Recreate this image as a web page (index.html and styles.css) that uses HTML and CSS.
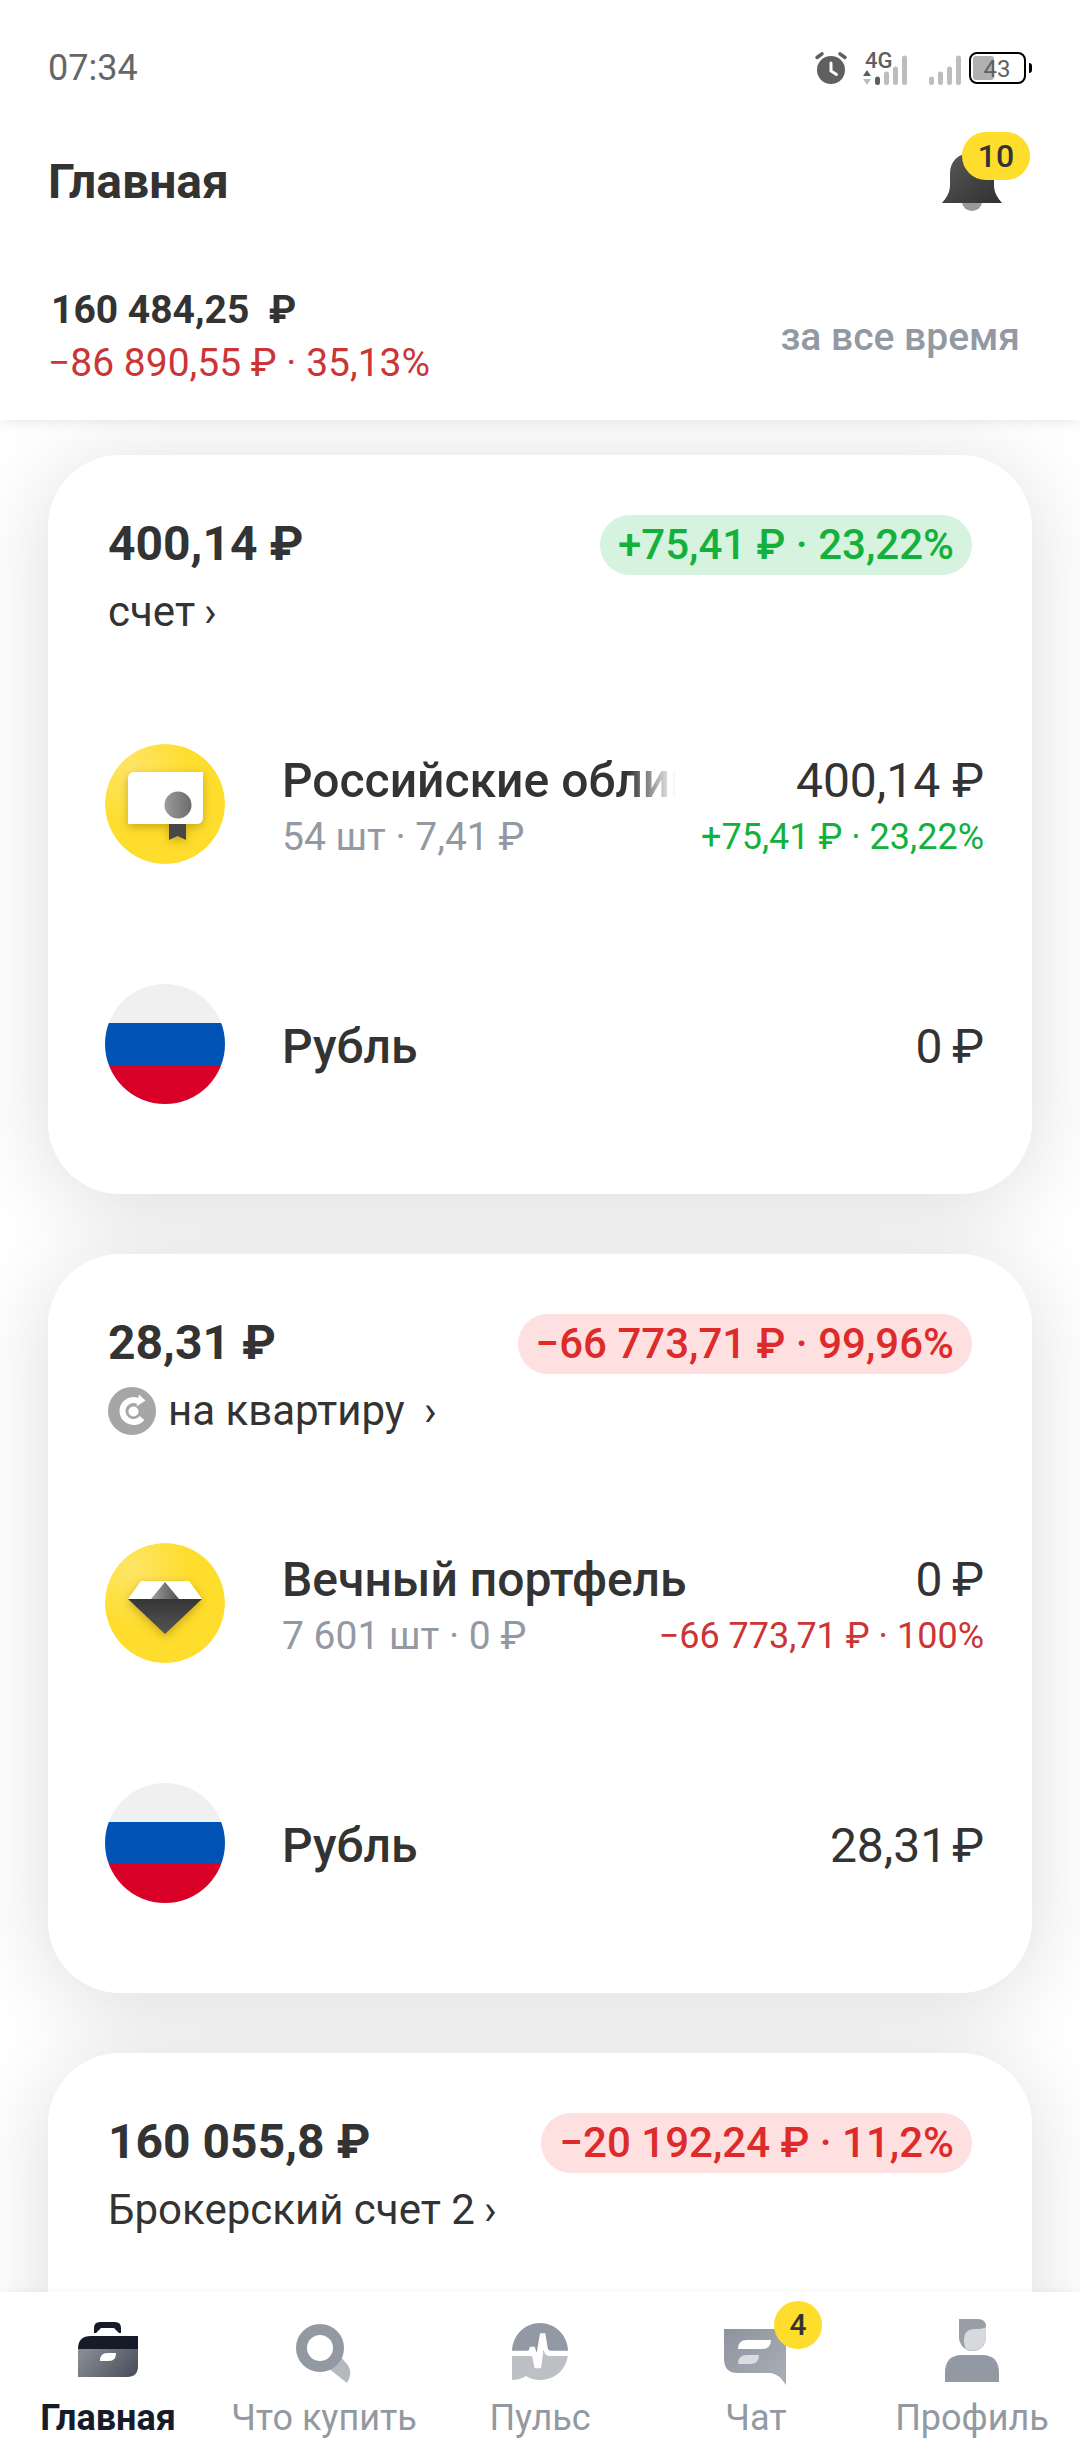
FILE: index.html
```html
<!DOCTYPE html>
<html lang="ru">

<head>
    <meta charset="UTF-8">
    <meta name="viewport" content="width=device-width, initial-scale=1.0">
    <title>Главная</title>
    <link rel="stylesheet" href="styles.css">
</head>

<body>

    <div class="app">
        <header class="header">
            <!-- status bar -->
            <div class="status">
                <span class="time">07:34</span>
                <div class="status-icons">
                    <svg class="alarm" width="32" height="32" viewBox="0 0 32 32">
                        <circle cx="16" cy="18" r="14" fill="#5f5f5f"/>
                        <path d="M2 5.500 7 1.800M30 5.500 25 1.800" stroke="#5f5f5f" stroke-width="3.500" stroke-linecap="round"/>
                        <path d="M16 11v8l5.500 3.500" fill="none" stroke="#fff" stroke-width="3" stroke-linecap="round"/>
                    </svg>
                    <svg class="signal" width="46" height="34" viewBox="0 0 46 34">
                        <text class="net" x="2" y="17">4G</text>
                        <path d="M0 25 4 19l4 6z" fill="#5f5f5f"/>
                        <path d="M0 28h8l-4 6z" fill="#bdbdbd"/>
                        <path d="M14.500 28v3.500" stroke="#5f5f5f" stroke-width="5" stroke-linecap="round"/>
                        <path d="M23.500 23v8.500M32.500 18v13.500M41.500 7v24.500" stroke="#bdbdbd" stroke-width="5" stroke-linecap="round"/>
                    </svg>
                    <svg class="signal" width="32" height="34" viewBox="0 0 32 34">
                        <path d="M2.500 28v3.500M11.500 23v8.500M20.500 18v13.500M29.500 7v24.500" stroke="#bdbdbd" stroke-width="5" stroke-linecap="round"/>
                    </svg>
                    <svg class="battery" width="63" height="32" viewBox="0 0 63 32">
                        <rect x="1" y="1" width="55" height="30" rx="7" fill="#fff" stroke="#000" stroke-width="2"/>
                        <rect x="4" y="4" width="21" height="24" rx="3" fill="#b0b0b0"/>
                        <path d="M60 11c2 0 3 1 3 3v4c0 2-1 3-3 3z" fill="#000"/>
                        <text class="charge" x="28" y="25">43</text>
                    </svg>
                </div>
            </div>

            <div class="title-row">
                <h1>Главная</h1>
                <button class="bell" type="button" aria-label="Уведомления">
                    <svg width="60" height="60" viewBox="0 0 60 60">
                        <defs>
                            <linearGradient id="bell" x1="0" y1="0" x2="1" y2="1">
                                <stop offset="0" stop-color="#5a5a5a"/>
                                <stop offset="1" stop-color="#303030"/>
                            </linearGradient>
                        </defs>
                        <path d="M20 50a10 9 0 0 0 20 0z" fill="#999"/>
                        <path d="M30 1C16 1 8 9 8 22v11c0 7-3 12-8 18h60c-5-6-8-11-8-18V22C52 9 44 1 30 1z" fill="url(#bell)"/>
                    </svg>
                    <span class="badge bell-badge">10</span>
                </button>
            </div>

            <div class="summary">
                <div>
                    <div class="total">160 484,25 &nbsp;₽</div>
                    <div class="total-change">−86 890,55 ₽ · 35,13%</div>
                </div>
                <button class="period" type="button">за все время</button>
            </div>
        </header>

        <main class="accounts">
            <section class="card">
                <div class="card-head">
                    <div>
                        <h2>400,14 ₽</h2>
                        <a class="account" href="#">счет <span>›</span></a>
                    </div>
                    <span class="pill up">+75,41 ₽ · 23,22%</span>
                </div>
                <div class="row">
                    <svg class="row-icon" viewBox="0 0 120 120">
                        <defs>
                            <radialGradient id="gold" cx=".22" cy=".2" r=".5">
                                <stop offset="0" stop-color="#ffe566"/>
                                <stop offset="1" stop-color="#fedd2c"/>
                            </radialGradient>
                            <linearGradient id="seal">
                                <stop offset="0" stop-color="#9b9b9b"/>
                                <stop offset="1" stop-color="#6b6b6b"/>
                            </linearGradient>
                            <filter id="shade" x="-30%" y="-30%" width="160%" height="170%">
                                <feDropShadow dx="0" dy="3" stdDeviation="5" flood-color="#8a6500" flood-opacity=".45"/>
                            </filter>
                        </defs>
                        <circle cx="60" cy="60" r="60" fill="url(#gold)"/>
                        <g filter="url(#shade)">
                            <path d="M64 78h17v18l-8.500-4-8.500 4z" fill="#464646"/>
                            <path d="M29 28h69v46a6 6 0 0 1-6 6H23V34a6 6 0 0 1 6-6z" fill="#fff"/>
                        </g>
                        <circle cx="73" cy="61" r="13.500" fill="url(#seal)"/>
                    </svg>
                    <div class="row-body">
                        <div class="line">
                            <span class="name fade">Российские облигации</span>
                            <span class="value">400,14 ₽</span>
                        </div>
                        <div class="line">
                            <span class="amount">54 шт · 7,41 ₽</span>
                            <span class="change green">+75,41 ₽ · 23,22%</span>
                        </div>
                    </div>
                </div>
                <div class="row">
                    <span class="row-icon flag"></span>
                    <div class="row-body">
                        <div class="line">
                            <span class="name">Рубль</span>
                            <span class="value">0&thinsp;₽</span>
                        </div>
                    </div>
                </div>
            </section>

            <section class="card">
                <div class="card-head">
                    <div>
                        <h2>28,31 ₽</h2>
                        <a class="account" href="#">
                            <svg class="account-icon" viewBox="0 0 48 48">
                                <circle cx="24" cy="24" r="24" fill="#a6a6a6"/>
                                <path d="M31 14.500A11 11 0 1 0 34 31" fill="none" stroke="#fff" stroke-width="6"/>
                                <path d="M31 7.500l6.500 6-9 6z" fill="#fff"/>
                                <circle cx="25.500" cy="24.500" r="5" fill="#fff"/>
                            </svg>
                            на квартиру&nbsp; <span>›</span>
                        </a>
                    </div>
                    <span class="pill down">−66 773,71 ₽ · 99,96%</span>
                </div>
                <div class="row">
                    <svg class="row-icon" viewBox="0 0 120 120">
                        <defs>
                            <linearGradient id="peak">
                                <stop offset="0" stop-color="#a0a0a0"/>
                                <stop offset="1" stop-color="#505050"/>
                            </linearGradient>
                            <linearGradient id="gem" x1="0" y1="0" x2="0" y2="1">
                                <stop offset="0" stop-color="#353535"/>
                                <stop offset="1" stop-color="#555"/>
                            </linearGradient>
                        </defs>
                        <circle cx="60" cy="60" r="60" fill="url(#gold)"/>
                        <g filter="url(#shade)">
                            <path d="M36 38h48l13 18H23z" fill="#fff"/>
                            <path d="M23 56h74L60 91z" fill="url(#gem)"/>
                        </g>
                        <path d="M60 39l14 17H46z" fill="url(#peak)"/>
                    </svg>
                    <div class="row-body">
                        <div class="line">
                            <span class="name">Вечный портфель</span>
                            <span class="value">0&thinsp;₽</span>
                        </div>
                        <div class="line">
                            <span class="amount">7 601 шт · 0 ₽</span>
                            <span class="change red">−66 773,71 ₽ · 100%</span>
                        </div>
                    </div>
                </div>
                <div class="row">
                    <span class="row-icon flag"></span>
                    <div class="row-body">
                        <div class="line">
                            <span class="name">Рубль</span>
                            <span class="value">28,31&hairsp;₽</span>
                        </div>
                    </div>
                </div>
            </section>

            <section class="card">
                <div class="card-head">
                    <div>
                        <h2>160 055,8 ₽</h2>
                        <a class="account" href="#">Брокерский счет 2 <span>›</span></a>
                    </div>
                    <span class="pill down">−20 192,24 ₽ · 11,2%</span>
                </div>
            </section>
        </main>

        <!-- tab bar -->
        <nav class="tabs">
            <a class="tab active" href="#">
                <svg width="72" height="72" viewBox="0 0 72 72">
                    <defs>
                        <linearGradient id="case" x1="0" y1=".3" x2="1" y2=".7">
                            <stop offset="0" stop-color="#868a93"/>
                            <stop offset="1" stop-color="#4d515e"/>
                        </linearGradient>
                    </defs>
                    <path d="M22 17v-5q0-6 6-6h15q6 0 6 6v5h-2l-5-5H29l-5 5z" fill="#151b28"/>
                    <path d="M6 33h60v17q0 11-11 11H6z" fill="url(#case)"/>
                    <path d="M6 33q0-13 13-13h47v13z" fill="#151b28"/>
                    <path d="M28 45q0-8 7-8h9q0 8-7 8z" fill="#fff"/>
                </svg>
                <span>Главная</span>
            </a>
            <a class="tab" href="#">
                <svg width="72" height="72" viewBox="0 0 72 72">
                    <path d="M40 52l12-12 6 7q8 8 1 20z" fill="#b5b8bd"/>
                    <circle cx="32" cy="32" r="18.500" fill="#fff" stroke="#9299a3" stroke-width="11"/>
                </svg>
                <span>Что купить</span>
            </a>
            <a class="tab" href="#">
                <svg width="72" height="72" viewBox="0 0 72 72">
                    <path d="M8 36C8 19 21 7 36 7s28 12 28 29z" fill="#9299a5"/>
                    <path d="M8 36h56c0 17-13 28-28 28q-8 0-14-4-6 4-14 4z" fill="#bdc0c4"/>
                    <path d="M6 34.700H24.500L26 30.700h4.700L32.700 37 36 17.300h5.300L43.700 32q.5 2.700 3.500 2.700H66V40H46q-5 0-6.500-6L37 52.300H30.700L28 40H6z" fill="#fff"/>
                </svg>
                <span>Пульс</span>
            </a>
            <a class="tab" href="#">
                <svg width="72" height="72" viewBox="0 0 72 72">
                    <defs>
                        <linearGradient id="chat" x1="0" y1="0" x2="1" y2="1">
                            <stop offset="0" stop-color="#8e939e"/>
                            <stop offset="1" stop-color="#aab0b8"/>
                        </linearGradient>
                    </defs>
                    <path d="M4 13h62v56q-7-11-15-12H18Q4 57 4 43z" fill="url(#chat)"/>
                    <path d="M18 33q0-9 9-9h24q0 9-9 9z" fill="#fff"/>
                    <path d="M18 48q0-9 9-9h12q0 9-9 9z" fill="#dadce0"/>
                </svg>
                <span class="badge chat-badge">4</span>
                <span>Чат</span>
            </a>
            <a class="tab" href="#">
                <svg width="72" height="72" viewBox="0 0 72 72">
                    <path d="M23 3h19q8 0 8 8v10a13.500 14 0 0 1-27 0z" fill="#9a9ea6"/>
                    <path d="M50 11v10a13.500 14 0 0 1-20 12q-2-3-2-9 0-11 11-11 8 0 11-2z" fill="#d7d9dd"/>
                    <path d="M9 66V57q0-18 17-18h20q17 0 17 18v9z" fill="#9299a3"/>
                </svg>
                <span>Профиль</span>
            </a>
        </nav>
    </div>

</body>

</html>
```
FILE: styles.css
```css
* {
    box-sizing: border-box;
}
body {
    margin: 0;
    font-family: Roboto, "Noto Sans", sans-serif;
    color: #333;
    background-color: #fff;
}
h1, h2 {
    margin: 0;
    font-size: 48px;
    line-height: 60px;
    font-weight: 700;
}
h2 {
    line-height: 58px;
}
a {
    color: inherit;
    text-decoration: none;
}
button {
    padding: 0;
    border: 0;
    background: none;
    font-family: inherit;
}
.app {
    display: flex;
    flex-direction: column;
    height: 100vh;
}

/* header */
.header {
    position: relative;
    z-index: 1;
    padding: 46px 48px 30px;
    background-color: #fff;
    box-shadow: 0 0 14px rgba(0, 0, 0, 0.12);
}
.status {
    display: flex;
    justify-content: space-between;
    align-items: center;
    height: 44px;
}
.time {
    font-size: 36px;
    color: #666;
}
.status-icons {
    display: flex;
    align-items: center;
}
.status-icons svg {
    overflow: visible;
}
.signal {
    margin-left: 16px;
}
.signal + .signal {
    margin-left: 20px;
}
.battery {
    margin-left: 8px;
}
.net {
    font-size: 22px;
    font-weight: 500;
    fill: #5f5f5f;
}
.charge {
    font-size: 24px;
    text-anchor: middle;
    fill: #5f5f5f;
}
.title-row {
    display: flex;
    justify-content: space-between;
    margin-top: 62px;
    padding-right: 30px;
}
.bell {
    position: relative;
    width: 60px;
    height: 60px;
}
.badge {
    position: absolute;
    height: 48px;
    border-radius: 24px;
    line-height: 48px;
    font-weight: 500;
    text-align: center;
    color: #333;
    background-color: #fedd2c;
}
.bell-badge {
    top: -20px;
    left: 20px;
    width: 68px;
    font-size: 32px;
}
.summary {
    display: flex;
    justify-content: space-between;
    align-items: center;
    margin-top: 72px;
    padding-right: 12px;
    font-size: 39px;
    line-height: 53px;
}
.total {
    padding-left: 3px;
    font-weight: 700;
}
.total-change {
    color: #cb3535;
}
.period {
    font-size: 39px;
    font-weight: 500;
    color: #9299a2;
}

/* account cards */
.accounts {
    flex: 1;
    min-height: 0;
    padding: 35px 48px 0;
    overflow: hidden;
    isolation: isolate;
}
.card {
    position: relative;
    min-height: 739px;
    margin-bottom: 60px;
    padding-bottom: 30px;
    border-radius: 72px;
    background-color: #fff;
}
/* the shadow lies under every card, so neighbours stay clean */
.card::before {
    content: "";
    position: absolute;
    inset: 0;
    z-index: -1;
    border-radius: 72px;
    box-shadow: 0 10px 90px rgba(0, 0, 0, 0.14);
}
.card-head {
    display: flex;
    justify-content: space-between;
    align-items: flex-start;
    height: 229px;
    padding: 60px 60px 0;
}
.account {
    display: flex;
    align-items: center;
    gap: 9px;
    margin-top: 9px;
    font-size: 42px;
    line-height: 60px;
}
.account-icon {
    width: 48px;
    height: 48px;
    margin-right: 3px;
}
.pill {
    padding: 0 18px;
    border-radius: 30px;
    font-size: 42px;
    line-height: 60px;
    font-weight: 500;
    white-space: nowrap;
}
.up {
    color: #13b13b;
    background-color: #d6f3df;
}
.down {
    color: #dd2a2a;
    background-color: #fee0e0;
}
.row {
    display: flex;
    align-items: center;
    gap: 57px;
    height: 240px;
    padding: 0 48px 0 57px;
}
.row-icon {
    flex: none;
    width: 120px;
    height: 120px;
    border-radius: 50%;
}
.flag {
    background: linear-gradient(#f0f0f0 39px, #0052b4 39px, #0052b4 81px, #d80027 81px);
}
.row-body {
    flex: 1;
    min-width: 0;
    padding-top: 6px;
}
.line {
    display: flex;
    justify-content: space-between;
    white-space: nowrap;
}
.name {
    min-width: 0;
    font-size: 48px;
    line-height: 60px;
    font-weight: 500;
}
.fade {
    margin-right: 120px;
    overflow: hidden;
    -webkit-mask-image: linear-gradient(to left, transparent, #000 48px);
    mask-image: linear-gradient(to left, transparent, #000 48px);
}
.value {
    font-size: 48px;
    line-height: 60px;
}
.amount {
    font-size: 39px;
    line-height: 52px;
    color: #9299a2;
}
.change {
    font-size: 36px;
    line-height: 52px;
}
.green {
    color: #13b13b;
}
.red {
    color: #cb3535;
}

/* tab bar */
.tabs {
    position: relative;
    z-index: 1;
    display: grid;
    grid-template-columns: repeat(5, 1fr);
    height: 168px;
    padding-top: 24px;
    background-color: #fff;
    box-shadow: 0 0 10px rgba(0, 0, 0, 0.05);
}
.tab {
    position: relative;
    display: flex;
    flex-direction: column;
    align-items: center;
    gap: 8px;
    font-size: 36px;
    line-height: 44px;
    color: #9299a2;
}
.active {
    font-weight: 700;
    color: #151b28;
}
.chat-badge {
    top: -15px;
    left: calc(50% + 18px);
    width: 48px;
    font-size: 30px;
}
```
